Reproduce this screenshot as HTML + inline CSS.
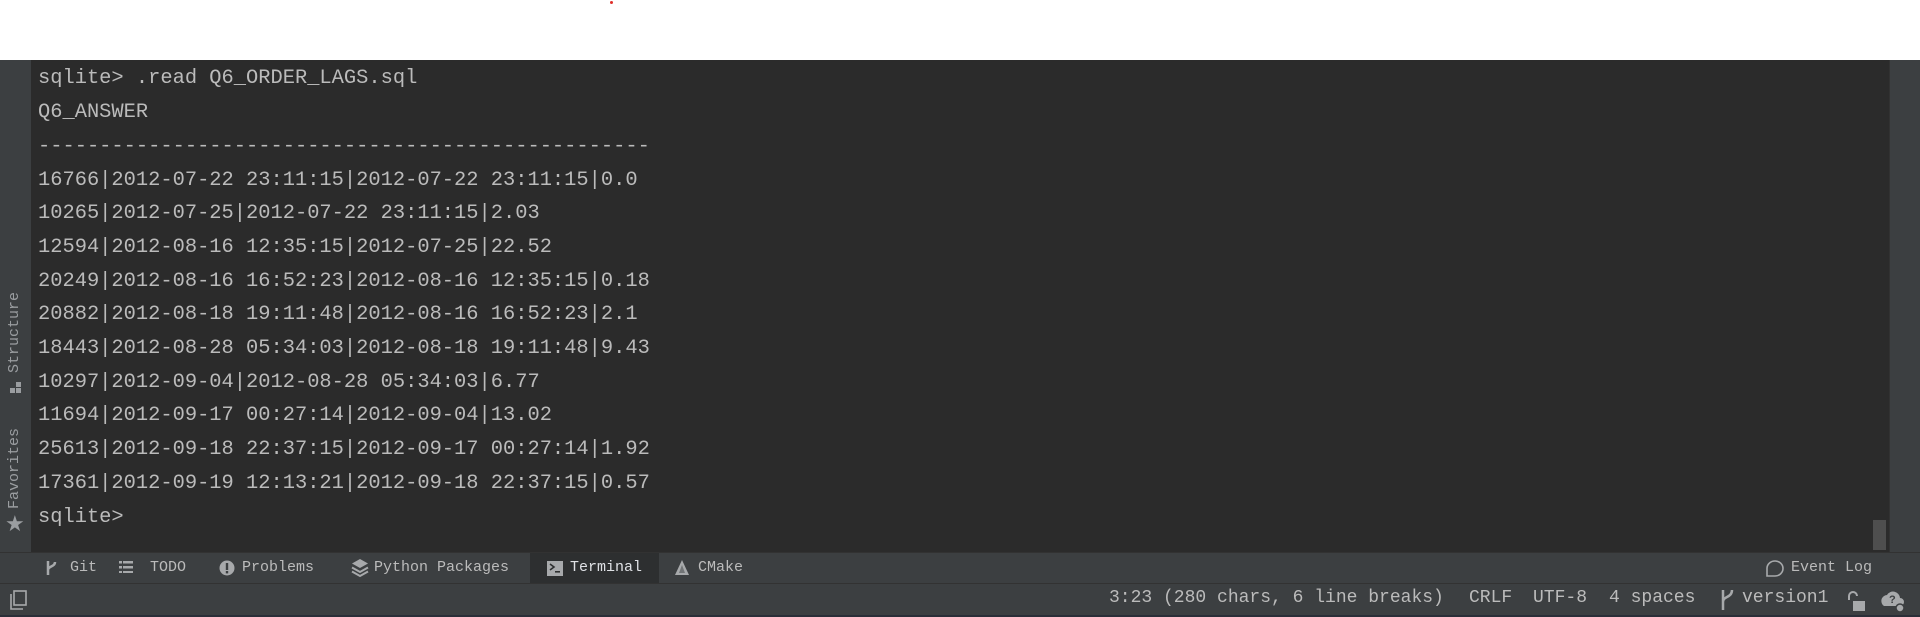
<!DOCTYPE html>
<html><head><meta charset="utf-8"><style>
*{margin:0;padding:0;box-sizing:border-box}
body{width:1920px;height:617px;background:#fff;position:relative;overflow:hidden;font-family:"Liberation Mono",monospace}
.abs{position:absolute}
#term{left:31px;top:60px;width:1858px;height:492px;background:#2b2b2b}
#ls{left:0;top:60px;width:31px;height:492px;background:#3c3f41}
#rs{left:1889px;top:60px;width:31px;height:492px;background:#3c3f41;border-left:1px solid #323232}
.ln{position:absolute;left:38px;font-size:20.4px;color:#bbbbbb;white-space:pre;line-height:34px}
#tb{left:0;top:552px;width:1920px;height:31px;background:#3c3f41;border-top:1px solid #323232}
#sb{left:0;top:583px;width:1920px;height:34px;background:#3c3f41;border-top:1px solid #323232}
.t{position:absolute;font-size:15px;color:#bbbbbb;white-space:pre;line-height:20px}
.s{position:absolute;font-size:18px;color:#bbbbbb;white-space:pre;line-height:22px;top:587px}
.v{position:absolute;font-family:"Liberation Mono",monospace;font-size:15px;color:#9a9da0;transform:rotate(-90deg);transform-origin:left top;white-space:pre;line-height:18px}
</style></head><body>
<div class="abs" style="left:610px;top:1px;width:3px;height:3px;background:#e0302a;border-radius:50%"></div>
<div id="term" class="abs"></div>
<div id="ls" class="abs"></div>
<div id="rs" class="abs"></div>
<div class="abs" style="left:1873px;top:520px;width:13px;height:30px;background:#4e4e4e"></div>
<div class="v" style="left:6px;top:373px">Structure</div>
<div class="abs" style="left:10px;top:388px;width:5px;height:5px;background:#9a9da0"></div>
<div class="abs" style="left:16px;top:388px;width:5px;height:5px;background:#9a9da0"></div>
<div class="abs" style="left:16px;top:382px;width:5px;height:5px;background:#9a9da0"></div>
<div class="v" style="left:6px;top:509px">Favorites</div>
<div class="abs" style="left:5px;top:512px;font-size:22px;color:#9a9da0;font-family:'DejaVu Sans',sans-serif">★</div>

<div class="ln" style="top:62px">sqlite&gt; .read Q6_ORDER_LAGS.sql</div>
<div class="ln" style="top:96px">Q6_ANSWER</div>
<div class="ln" style="top:130px">--------------------------------------------------</div>
<div class="ln" style="top:164px">16766|2012-07-22 23:11:15|2012-07-22 23:11:15|0.0</div>
<div class="ln" style="top:197px">10265|2012-07-25|2012-07-22 23:11:15|2.03</div>
<div class="ln" style="top:231px">12594|2012-08-16 12:35:15|2012-07-25|22.52</div>
<div class="ln" style="top:265px">20249|2012-08-16 16:52:23|2012-08-16 12:35:15|0.18</div>
<div class="ln" style="top:298px">20882|2012-08-18 19:11:48|2012-08-16 16:52:23|2.1</div>
<div class="ln" style="top:332px">18443|2012-08-28 05:34:03|2012-08-18 19:11:48|9.43</div>
<div class="ln" style="top:366px">10297|2012-09-04|2012-08-28 05:34:03|6.77</div>
<div class="ln" style="top:399px">11694|2012-09-17 00:27:14|2012-09-04|13.02</div>
<div class="ln" style="top:433px">25613|2012-09-18 22:37:15|2012-09-17 00:27:14|1.92</div>
<div class="ln" style="top:467px">17361|2012-09-19 12:13:21|2012-09-18 22:37:15|0.57</div>
<div class="ln" style="top:501px">sqlite&gt;</div>

<div id="tb" class="abs"></div>
<div class="abs" style="left:530px;top:553px;width:129px;height:30px;background:#2d2f30"></div>
<svg class="abs" style="left:44px;top:559px" width="14" height="18" viewBox="0 0 14 18"><path d="M4 2v14M4 11c0-4 7-3 7-8" stroke="#a7a9ab" stroke-width="2.5" fill="none"/></svg>
<div class="t" style="left:70px;top:558px">Git</div>
<svg class="abs" style="left:119px;top:561px" width="14" height="12"><rect x="0" y="0" width="3" height="2.5" fill="#a7a9ab"/><rect x="4" y="0" width="10" height="2.5" fill="#a7a9ab"/><rect x="0" y="5" width="3" height="2.5" fill="#a7a9ab"/><rect x="4" y="5" width="10" height="2.5" fill="#a7a9ab"/><rect x="0" y="10" width="3" height="2.5" fill="#a7a9ab"/><rect x="4" y="10" width="10" height="2.5" fill="#a7a9ab"/></svg>
<div class="t" style="left:150px;top:558px">TODO</div>
<svg class="abs" style="left:219px;top:560px" width="16" height="16"><circle cx="8" cy="8" r="7.5" fill="#a7a9ab"/><rect x="6.8" y="3" width="2.4" height="7" fill="#3c3f41"/><rect x="6.8" y="11" width="2.4" height="2.4" fill="#3c3f41"/></svg>
<div class="t" style="left:242px;top:558px">Problems</div>
<svg class="abs" style="left:351px;top:558px" width="18" height="20"><path d="M9 1L1 5.5 9 10 17 5.5z" fill="#a7a9ab"/><path d="M1 9.5L9 14 17 9.5M1 13.5L9 18 17 13.5" stroke="#a7a9ab" stroke-width="2" fill="none"/></svg>
<div class="t" style="left:374px;top:558px">Python Packages</div>
<svg class="abs" style="left:547px;top:561px" width="16" height="15"><rect width="16" height="15" fill="#a7a9ab"/><path d="M3 3l4 3-4 3" stroke="#2d2f30" stroke-width="1.6" fill="none"/><rect x="8" y="10" width="5" height="1.6" fill="#2d2f30"/></svg>
<div class="t" style="left:570px;top:558px;color:#dfe1e5">Terminal</div>
<svg class="abs" style="left:674px;top:559px" width="16" height="17"><path d="M8 1L1 16h14z" fill="#a7a9ab"/><path d="M8 6L5 14h6z" fill="#3c3f41" opacity=".5"/></svg>
<div class="t" style="left:698px;top:558px">CMake</div>
<svg class="abs" style="left:1765px;top:559px" width="20" height="19"><path d="M2 17V9a8 7.5 0 1 1 8 8z" stroke="#a7a9ab" stroke-width="1.6" fill="none"/></svg>
<div class="t" style="left:1791px;top:558px">Event Log</div>

<div id="sb" class="abs"></div>
<svg class="abs" style="left:10px;top:590px" width="18" height="20"><rect x="4" y="1" width="12" height="14" stroke="#a7a9ab" stroke-width="1.6" fill="none"/><path d="M1 4v15h12" stroke="#a7a9ab" stroke-width="1.6" fill="none"/></svg>
<div class="s" style="left:1109px">3:23 (280 chars, 6 line breaks)</div>
<div class="s" style="left:1469px">CRLF</div>
<div class="s" style="left:1533px">UTF-8</div>
<div class="s" style="left:1609px">4 spaces</div>
<svg class="abs" style="left:1719px;top:588px" width="16" height="24"><path d="M4 2v20M4 14c0-6 9-4 9-12" stroke="#a7a9ab" stroke-width="2.5" fill="none"/></svg>
<div class="s" style="left:1742px">version1</div>
<svg class="abs" style="left:1846px;top:590px" width="20" height="22"><path d="M3 10V6a4 4 0 0 1 8 0" stroke="#a7a9ab" stroke-width="2" fill="none"/><rect x="7" y="11" width="12" height="10" fill="#a7a9ab"/></svg>
<svg class="abs" style="left:1880px;top:589px" width="28" height="24"><path d="M4 17a6 6 0 0 1 3-11 7 7 0 0 1 13 3 4 4 0 0 1 0 8z" fill="#a7a9ab"/><text x="9" y="14" font-size="11" font-family="Liberation Sans" font-weight="bold" fill="#3c3f41">?</text><circle cx="20" cy="19" r="4" fill="#a7a9ab" stroke="#3c3f41" stroke-width="1.5"/></svg>
<div class="abs" style="left:0;top:615px;width:1920px;height:2px;background:#2a2e38"></div>
</body></html>
